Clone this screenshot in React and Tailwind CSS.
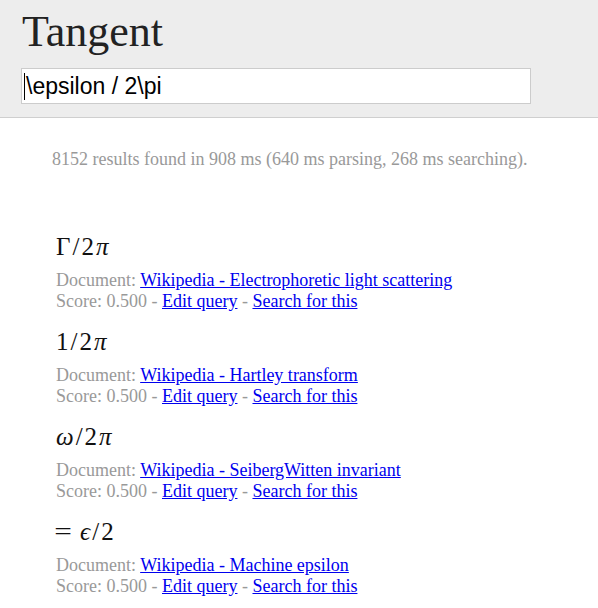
import React from 'react';

const results = [
    {
        formula: (
            <>
                <span>Γ</span>
                <span>/</span>
                <span>2</span>
                <span className="italic">π</span>
            </>
        ),
        doc: 'Wikipedia - Electrophoretic light scattering',
    },
    {
        formula: (
            <>
                <span>1</span>
                <span>/</span>
                <span>2</span>
                <span className="italic">π</span>
            </>
        ),
        doc: 'Wikipedia - Hartley transform',
    },
    {
        formula: (
            <>
                <span className="italic">ω</span>
                <span>/</span>
                <span>2</span>
                <span className="italic">π</span>
            </>
        ),
        doc: 'Wikipedia - SeibergWitten invariant',
    },
    {
        formula: (
            <>
                <span className="mr-[8px] scale-x-125">=</span>
                <span className="italic">ϵ</span>
                <span>/</span>
                <span>2</span>
            </>
        ),
        doc: 'Wikipedia - Machine epsilon',
    },
];

function Result({ formula, doc }) {
    return (
        <div className="mb-[15px]">
            <div className="text-[25px] leading-[30px] mb-[8px] text-[#111] flex items-baseline gap-[2px]">
                {formula}
            </div>
            <div className="leading-[21px] text-[#999]">
                Document: <a href="#" className="text-[#0000ee] underline">{doc}</a>
            </div>
            <div className="leading-[21px] text-[#999]">
                Score: 0.500 - <a href="#" className="text-[#0000ee] underline">Edit query</a> -{' '}
                <a href="#" className="text-[#0000ee] underline">Search for this</a>
            </div>
        </div>
    );
}

export default function App() {
    return (
        <div className="w-[598px] h-[608px] overflow-hidden bg-white font-['Liberation_Serif','Times_New_Roman',serif] text-[18px]">
            {/* Header */}
            <div className="bg-[#ededed] border-b border-[#cfcfcf] pt-[8px] pb-[13px] pl-[21px]">
                <h1 className="text-[44px] leading-[48px] text-[#222] pl-[1px]">Tangent</h1>
                <div className="mt-[12px] w-[510px] h-[36px] bg-white border border-[#cccccc] flex items-center pl-[2px] font-['Liberation_Sans',Arial,sans-serif] text-[23px] text-black">
                    <span className="w-[1px] h-[27px] bg-black mr-[1px]"></span>
                    <span className="leading-[34px]">\epsilon / 2\pi</span>
                </div>
            </div>

            {/* Stats */}
            <div className="pl-[52px] mt-[31px] leading-[21px] text-[#999]">
                8152 results found in 908 ms (640 ms parsing, 268 ms searching).
            </div>

            {/* Results */}
            <div className="pl-[56px] mt-[62px]">
                {results.map((r, i) => (
                    <Result key={i} formula={r.formula} doc={r.doc} />
                ))}
            </div>
        </div>
    );
}
